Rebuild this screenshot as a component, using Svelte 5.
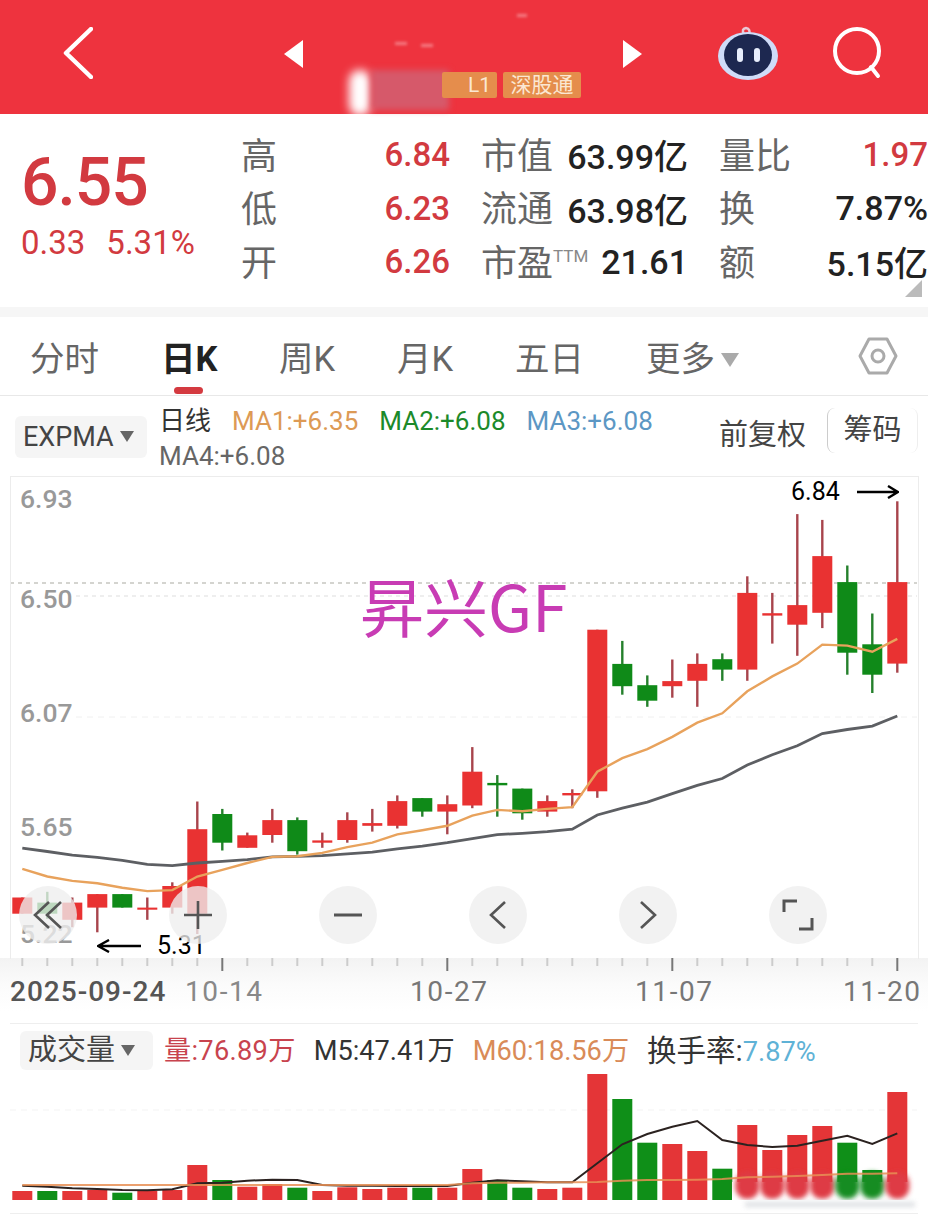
<script>
	// candle rows: [color, bodyTop, bodyBottom, wickTop, wickBottom], measured on a 3x crop of the chart
	const rows = [
		['r', 1232, 1280, 1232, 1280], ['g', 1247, 1280, 1215, 1295], ['r', 1247, 1298, 1232, 1320],
		['r', 1222, 1262, 1222, 1335], ['g', 1222, 1262, 1222, 1262], ['r', 1262, 1268, 1232, 1298],
		['r', 1198, 1262, 1187, 1280], ['r', 1030, 1280, 948, 1340], ['g', 985, 1070, 970, 1093],
		['r', 1048, 1085, 1040, 1085], ['r', 1003, 1047, 970, 1070], ['g', 1003, 1095, 995, 1105],
		['r', 1063, 1070, 1040, 1085], ['r', 1003, 1062, 980, 1070], ['r', 1012, 1020, 970, 1037],
		['r', 947, 1020, 930, 1028], ['g', 938, 978, 938, 993], ['r', 956, 978, 930, 1045],
		['r', 860, 960, 787, 968], ['g', 893, 900, 870, 993], ['g', 910, 983, 910, 1002],
		['r', 947, 978, 930, 993], ['r', 923, 930, 912, 968], ['r', 440, 918, 440, 937],
		['g', 541, 607, 473, 632], ['g', 604, 650, 575, 668], ['r', 592, 607, 528, 641],
		['r', 541, 591, 510, 668], ['g', 527, 558, 510, 591], ['r', 331, 558, 282, 591],
		['r', 391, 398, 331, 481], ['r', 367, 425, 98, 517], ['r', 222, 390, 115, 435],
		['g', 299, 508, 250, 573], ['g', 483, 573, 392, 627], ['r', 299, 540, 60, 567]
	];
	const cx = (i) => 22.3 + 25 * i;
	const py = (v) => +(480 + v / 2.958).toFixed(1);
	const candles = rows.map(([c, t, b, wt, wb], i) => ({
		c, x: cx(i), top: py(t), h: py(b) - py(t), wt: py(wt), wb: py(wb)
	}));

	const orange = [1147, 1170, 1183, 1190, 1203, 1213, 1210, 1170, 1150, 1130, 1112, 1110, 1100, 1083, 1070, 1045, 1033, 1020, 990, 973, 977, 970, 965, 860, 820, 793, 757, 715, 687, 622, 578, 540, 484, 487, 505, 467];
	const grey = [1086, 1096, 1107, 1113, 1122, 1134, 1138, 1130, 1125, 1120, 1112, 1110, 1108, 1103, 1098, 1088, 1080, 1070, 1058, 1046, 1042, 1037, 1030, 988, 968, 950, 925, 900, 880, 840, 810, 783, 747, 735, 725, 695];
	const line = (arr, fy) => arr.map((v, i) => `${cx(i)},${fy(v)}`).join(' ');

	const vols = [
		['r', 543], ['g', 543], ['r', 543], ['r', 540], ['g', 548], ['r', 543], ['r', 540], ['r', 465], ['g', 510],
		['r', 530], ['r', 522], ['g', 533], ['r', 543], ['r', 532], ['r', 537], ['r', 533], ['g', 533], ['r', 533],
		['r', 477], ['g', 510], ['g', 533], ['r', 537], ['r', 533], ['r', 192], ['g', 267], ['g', 398], ['r', 402],
		['r', 423], ['g', 476], ['r', 345], ['r', 420], ['r', 375], ['r', 348], ['g', 398], ['g', 480], ['r', 246]
	];
	const m5 = [527, 530, 535, 537, 540, 541, 538, 520, 518, 512, 509, 510, 525, 527, 527, 528, 528, 528, 518, 511, 514, 517, 517, 460, 403, 372, 350, 333, 390, 405, 411, 407, 392, 377, 402, 370];
	const m60 = [525, 525, 525, 525, 525, 525, 525, 525, 525, 525, 525, 525, 525, 525, 525, 525, 525, 525, 520, 518, 518, 517, 517, 516, 512, 510, 510, 509, 507, 502, 500, 498, 495, 491, 491, 490];
	const vy = (v) => +(v / 3).toFixed(1);

	const stats = [
		[{ l: '高', v: '6.84', red: true }, { l: '市值', v: '63.99亿' }, { l: '量比', v: '1.97', red: true }],
		[{ l: '低', v: '6.23', red: true }, { l: '流通', v: '63.98亿' }, { l: '换', v: '7.87%' }],
		[{ l: '开', v: '6.26', red: true }, { l: '市盈', sup: 'TTM', v: '21.61' }, { l: '额', v: '5.15亿' }]
	];
	const tabs = ['分时', '日K', '周K', '月K', '五日'];
</script>

<div class="page">
	<header class="top">
		<svg class="back" width="30" height="52" viewBox="0 0 30 52"><path d="M28 2 L3 26 L28 50" fill="none" stroke="#fff" stroke-width="4.5" stroke-linecap="round" stroke-linejoin="round"/></svg>
		<div class="pager">
			<i class="tri left"></i>
			<div class="name">
				<span class="smudge white"></span>
				<span class="smudge pink"></span>
				<span class="smudge speck one"></span>
				<span class="smudge speck two"></span>
				<span class="smudge speck three"></span>
				<span class="tag l1">L1</span>
				<span class="tag">深股通</span>
			</div>
			<i class="tri right"></i>
		</div>
		<svg class="robot" width="62" height="56" viewBox="0 0 62 56">
			<path d="M27 8 Q24 3 29 2 Q34 3 32 9" fill="none" stroke="#e9c9d6" stroke-width="2.5"/>
			<ellipse cx="31" cy="30" rx="30" ry="24" fill="#cfdcf8"/>
			<ellipse cx="31" cy="29" rx="24" ry="21" fill="#1d2850"/>
			<rect x="20" y="22" width="6" height="14" rx="3" fill="#e8eefc"/>
			<rect x="37" y="22" width="6" height="14" rx="3" fill="#e8eefc"/>
		</svg>
		<svg class="search" width="52" height="52" viewBox="0 0 52 52"><circle cx="25" cy="24" r="22" fill="none" stroke="#fff" stroke-width="4"/><path d="M39 40 L46 49" stroke="#fff" stroke-width="4" stroke-linecap="round"/></svg>
	</header>

	<section class="quote">
		<div class="price">
			<div class="big">6.55</div>
			<div class="chg"><span>0.33</span><span>5.31%</span></div>
		</div>
		<div class="stats">
			{#each stats as row}
				{#each row as s}
					<div class="stat">
						<span class="lab">{s.l}{#if s.sup}<sup>{s.sup}</sup>{/if}</span>
						<span class="val" class:red={s.red}>{s.v}</span>
					</div>
				{/each}
			{/each}
		</div>
		<i class="corner"></i>
	</section>

	<nav class="tabs">
		{#each tabs as t, i}
			<span class="tab" class:on={i == 1}>{t}</span>
		{/each}
		<span class="tab more">更多<i class="caret"></i></span>
		<svg class="hex" width="40" height="40" viewBox="0 0 40 40"><path d="M11 3 H29 L38 20 L29 37 H11 L2 20 Z" fill="none" stroke="#aaa" stroke-width="3" stroke-linejoin="round"/><circle cx="20" cy="20" r="6" fill="none" stroke="#aaa" stroke-width="3"/></svg>
	</nav>

	<div class="legend">
		<div class="chip">EXPMA<i class="caret dark"></i></div>
		<div class="mas">
			<span class="ma first">日线</span>
			<span class="ma a">MA1:+6.35</span>
			<span class="ma b">MA2:+6.08</span>
			<span class="ma c">MA3:+6.08</span>
			<span class="ma d">MA4:+6.08</span>
		</div>
		<span class="adj">前复权</span>
		<span class="chips">筹码</span>
	</div>

	<div class="chart">
		<svg class="plot" width="928" height="535" viewBox="0 475 928 535">
			<line x1="10" y1="582" x2="917" y2="582" stroke="#a9a9a0" stroke-dasharray="4 4"/>
			<line x1="76" y1="595" x2="917" y2="595" stroke="#ddd" stroke-dasharray="4 4"/>
			<line x1="76" y1="716" x2="917" y2="716" stroke="#f0f0f0" stroke-dasharray="6 5"/>

			<text class="axis" x="20" y="507">6.93</text>
			<text class="axis" x="20" y="607">6.50</text>
			<text class="axis" x="20" y="721">6.07</text>
			<text class="axis" x="20" y="835">5.65</text>
			<text class="axis" x="20" y="942">5.22</text>

			<text class="mark" x="360" y="631">昇兴GF</text>

			{#each candles as k}
				<line x1={k.x} x2={k.x} y1={k.wt} y2={k.wb} stroke={k.c == 'r' ? '#a8444c' : '#25802c'} stroke-width="2.4"/>
				<rect x={k.x - 10} y={k.top} width="20" height={k.h} fill={k.c == 'r' ? '#e93232' : '#0f8a18'}/>
			{/each}

			<polyline points={line(grey, py)} fill="none" stroke="#5d5f63" stroke-width="2.8"/>
			<polyline points={line(orange, py)} fill="none" stroke="#e8a25c" stroke-width="2.4"/>

			<rect x="0" y="957" width="928" height="53" fill="url(#fade)"/>
			<defs>
				<linearGradient id="fade" x1="0" y1="0" x2="0" y2="1"><stop offset="0" stop-color="#f3f3f3"/><stop offset=".5" stop-color="#fbfbfb"/><stop offset="1" stop-color="#fff"/></linearGradient>
			</defs>
			{#each candles as k, i}
				{@const major = (i + 1) % 9 == 0}
				<line x1={k.x} x2={k.x} y1="957" y2={major ? 970 : 965} stroke={major ? '#777' : '#ccc'} stroke-width="2"/>
			{/each}
			<text class="date strong" x="10" y="1000">2025-09-24</text>
			<text class="date soft" x="185" y="1000">10-14</text>
			<text class="date" x="410" y="1000">10-27</text>
			<text class="date" x="635" y="1000">11-07</text>
			<text class="date" x="843" y="1000">11-20</text>
		</svg>

		<div class="note hi">6.84<svg width="42" height="14" viewBox="0 0 42 14"><path d="M0 7 H40 M31 1 L41 7 L31 13" fill="none" stroke="#000" stroke-width="2.4"/></svg></div>
		<div class="note lo"><svg width="44" height="14" viewBox="0 0 44 14"><path d="M44 7 H2 M12 1 L1 7 L12 13" fill="none" stroke="#000" stroke-width="2.4"/></svg>5.31</div>

		<div class="controls">
			<button aria-label="first"><svg width="30" height="30" viewBox="0 0 30 30"><path d="M16 2 L2 15 L16 28 M28 2 L14 15 L28 28" fill="none" stroke="#555" stroke-width="2.6"/></svg></button>
			<button aria-label="zoom in"><svg width="30" height="30" viewBox="0 0 30 30"><path d="M1 15 H29 M15 1 V29" stroke="#555" stroke-width="2.6"/></svg></button>
			<button aria-label="zoom out"><svg width="30" height="30" viewBox="0 0 30 30"><path d="M1 15 H29" stroke="#555" stroke-width="3"/></svg></button>
			<button aria-label="prev"><svg width="30" height="30" viewBox="0 0 30 30"><path d="M22 2 L8 15 L22 28" fill="none" stroke="#555" stroke-width="2.6"/></svg></button>
			<button aria-label="next"><svg width="30" height="30" viewBox="0 0 30 30"><path d="M8 2 L22 15 L8 28" fill="none" stroke="#555" stroke-width="2.6"/></svg></button>
			<button aria-label="fullscreen"><svg width="32" height="32" viewBox="0 0 32 32"><path d="M15 2 H2 V13 M17 30 H30 V19" fill="none" stroke="#555" stroke-width="3"/></svg></button>
		</div>
	</div>

	<section class="volume">
		<div class="vol-legend">
			<div class="chip small">成交量<i class="caret dark"></i></div>
			<span class="v-red">量:76.89万</span>
			<span class="v-dark">M5:47.41万</span>
			<span class="v-org">M60:18.56万</span>
			<span class="v-dark turn">换手率:<em>7.87%</em></span>
		</div>
		<svg class="bars" width="928" height="134" viewBox="0 56 928 134">
			<defs><filter id="soft" x="-30%" y="-30%" width="160%" height="160%"><feGaussianBlur stdDeviation="2.5"/></filter></defs>
			<line x1="10" x2="917" y1="100" y2="100" stroke="#f3f3f3" stroke-dasharray="6 5"/>
			{#each vols as [c, t], i}
				<rect x={cx(i) - 10} y={vy(t)} width="20" height={190 - vy(t)} fill={c == 'r' ? '#e43537' : '#0f8f18'}/>
			{/each}
			<!-- the bottoms of the last bars are smeared in the source -->
			<rect x="732" y="172" width="180" height="18" fill="#fff"/>
			{#each vols.slice(29) as [c], i}
				<rect x={cx(i + 29) - 12} y="162" width="24" height="27" rx="12" fill={c == 'r' ? '#de3a44' : '#128c20'} filter="url(#soft)"/>
			{/each}
			<polyline points={line(m5, vy)} fill="none" stroke="#2b2220" stroke-width="2"/>
			<polyline points={line(m60, vy)} fill="none" stroke="#e88f55" stroke-width="2" opacity=".85"/>
		</svg>
		<div class="wm"></div>
	</section>
</div>

<style>
	:global(body) {
		background: #fff;
		font-family: "Roboto", "Noto Sans CJK SC", sans-serif;
	}
	.page {
		width: 928px;
		height: 1216px;
		overflow: hidden;
	}
	.top {
		align-items: flex-start;
		background: #ee333e;
		display: flex;
		height: 114px;
		padding-left: 63px;
		position: relative;
	}
	.back {
		margin-top: 27px;
	}
	.pager {
		align-items: flex-start;
		display: flex;
		margin-left: 191px;
		width: 358px;
	}
	.tri {
		border-bottom: 14px solid transparent;
		border-top: 14px solid transparent;
		margin-top: 40px;
	}
	.tri.left {
		border-right: 19px solid #fff;
	}
	.tri.right {
		border-left: 19px solid #fff;
	}
	.name {
		align-items: center;
		display: flex;
		flex: 1;
		gap: 6px;
		justify-content: flex-end;
		margin-top: 72px;
		padding-right: 42px;
		position: relative;
	}
	.smudge {
		filter: blur(5px);
		position: absolute;
	}
	.smudge.white {
		background: #fff;
		border-radius: 12px;
		height: 46px;
		left: 46px;
		top: -2px;
		width: 22px;
	}
	.smudge.pink {
		background: #d6596a;
		filter: blur(3px);
		height: 40px;
		left: 68px;
		top: -2px;
		width: 78px;
	}
	.speck {
		background: #f57f86;
		filter: blur(1.5px);
		height: 3px;
		width: 12px;
	}
	.speck.one { left: 92px; top: -30px; }
	.speck.two { left: 118px; top: -28px; }
	.speck.three { left: 214px; top: -58px; width: 10px; }
	.tag {
		background: #e58d4c;
		border-radius: 2px;
		color: #fbe7d2;
		font-size: 21px;
		height: 26px;
		line-height: 26px;
		padding: 0 3px;
		position: relative;
		text-align: center;
		width: 72px;
	}
	.tag.l1 {
		padding-left: 26px;
		text-align: left;
		width: 26px;
	}
	.robot {
		margin-left: 75px;
		margin-top: 26px;
	}
	.search {
		margin-left: 53px;
		margin-top: 27px;
	}
	.quote {
		border-bottom: 10px solid #f6f6f6;
		display: flex;
		height: 193px;
		position: relative;
	}
	.price {
		color: #d23a40;
		padding: 31px 0 0 21px;
		width: 220px;
	}
	.big {
		font-size: 66px;
		font-weight: 500;
		letter-spacing: -1px;
		line-height: 76px;
	}
	.chg {
		display: flex;
		font-size: 33px;
		gap: 21px;
		line-height: 38px;
		margin-top: 3px;
	}
	.stats {
		display: grid;
		flex: 1;
		grid-auto-rows: 53.5px;
		grid-template-columns: 209px 207px 209px;
		column-gap: 31px;
		padding-top: 14px;
		white-space: nowrap;
	}
	.stat {
		align-items: center;
		display: flex;
		justify-content: space-between;
	}
	.lab {
		color: #666;
		font-size: 36px;
		margin-top: -4px;
	}
	.lab sup {
		color: #888;
		font-size: 17px;
		line-height: 0;
		vertical-align: 14px;
	}
	.val {
		color: #222;
		font-size: 34px;
		font-weight: 500;
	}
	.val.red {
		color: #d23a40;
		font-size: 33px;
	}
	.corner {
		border-bottom: 17px solid #bbb;
		border-left: 17px solid transparent;
		bottom: 10px;
		position: absolute;
		right: 6px;
	}
	.tabs {
		align-items: center;
		border-bottom: 1px solid #e8e8e8;
		display: flex;
		height: 78px;
		padding-left: 30px;
		position: relative;
	}
	.tab {
		color: #666;
		font-size: 34.5px;
		margin-right: 60px;
		position: relative;
		white-space: nowrap;
		width: 58px;
	}
	.tab:nth-child(1) { width: 68px; margin-right: 63px; }
	.tab:nth-child(5) { width: 66px; margin-right: 65px; }
	.tab.on {
		color: #222;
		font-weight: 700;
	}
	.tab.on::after {
		background: #d43a40;
		border-radius: 4px;
		bottom: -13px;
		content: "";
		height: 7px;
		left: 13px;
		position: absolute;
		width: 29px;
	}
	.caret {
		border-left: 9px solid transparent;
		border-right: 9px solid transparent;
		border-top: 14px solid #aaa;
		display: inline-block;
		margin-left: 6px;
		vertical-align: 4px;
	}
	.caret.dark {
		border-left-width: 7px;
		border-right-width: 7px;
		border-top: 11px solid #666;
		margin-left: 6px;
	}
	.hex {
		position: absolute;
		left: 858px;
		top: 19px;
	}
	.legend {
		align-items: flex-start;
		display: flex;
		height: 80px;
		padding-left: 15px;
		position: relative;
	}
	.chip {
		background: #f5f5f5;
		border-radius: 6px;
		color: #444;
		font-size: 27px;
		height: 42px;
		line-height: 42px;
		margin-top: 20px;
		padding-left: 8px;
		white-space: nowrap;
		width: 124px;
	}
	.mas {
		column-gap: 21px;
		display: flex;
		flex-wrap: wrap;
		font-size: 26px;
		line-height: 35px;
		margin-left: 12px;
		padding-top: 8px;
		width: 540px;
	}
	.ma.first { color: #333; }
	.ma.a { color: #dd9a55; }
	.ma.b { color: #1c8a2a; }
	.ma.c { color: #5c97c4; }
	.ma.d { color: #666; width: 100%; }
	.adj {
		color: #444;
		font-size: 29px;
		margin-left: 20px;
		margin-top: 15px;
		white-space: nowrap;
	}
	.chips {
		border-left: 1px solid #ccc;
		border-right: 1px solid #eee;
		border-radius: 8px;
		color: #444;
		font-size: 29px;
		height: 45px;
		line-height: 45px;
		margin-left: 21px;
		margin-top: 12px;
		text-align: center;
		width: 89px;
	}
	.chart {
		height: 535px;
		position: relative;
	}
	.plot {
		border: none;
		display: block;
	}
	.chart::before {
		border: 1px solid #ececec;
		border-bottom: none;
		content: "";
		height: 482px;
		left: 10px;
		position: absolute;
		top: 0;
		width: 907px;
	}
	.axis {
		fill: #999;
		font-size: 26.5px;
		font-weight: 500;
	}
	.mark {
		fill: #c83cb4;
		font-family: "Noto Sans CJK SC", sans-serif;
		font-size: 64px;
	}
	.date {
		fill: #777;
		font-size: 28px;
		letter-spacing: 1.6px;
	}
	.date.strong { fill: #555; font-weight: 500; letter-spacing: 1px; }
	.date.soft { fill: #888; }
	.controls {
		display: flex;
		gap: 92px;
		left: 19px;
		position: absolute;
		top: 410px;
	}
	.controls button {
		align-items: center;
		background: rgba(238, 238, 238, 0.78);
		border: none;
		border-radius: 50%;
		display: flex;
		height: 58px;
		justify-content: center;
		padding: 0;
		width: 58px;
	}
	.note {
		align-items: center;
		color: #000;
		display: flex;
		font-size: 25px;
		position: absolute;
	}
	.note.hi {
		gap: 17px;
		left: 791px;
		top: 1px;
	}
	.note.lo {
		gap: 16px;
		left: 97px;
		top: 455px;
	}
	.volume {
		border-bottom: 1px solid #eee;
		border-top: 1px solid #eee;
		height: 189px;
		margin: 12px 10px 0;
		position: relative;
	}
	.vol-legend {
		align-items: center;
		display: flex;
		font-size: 27.2px;
		height: 47px;
		padding: 3px 0 0 10px;
		white-space: nowrap;
	}
	.vol-legend > span {
		margin-right: 18px;
		margin-top: -5px;
	}
	.chip.small {
		font-size: 29px;
		height: 39px;
		line-height: 39px;
		margin: 0 11px 0 0;
		width: 125px;
	}
	.v-red { color: #c8434e; letter-spacing: 0.3px; }
	.v-dark { color: #333; }
	.v-org { color: #d98b58; }
	.turn { font-size: 29.5px; }
	.v-dark em { color: #5fb2d6; font-size: 27.2px; font-style: normal; }
	.bars {
		display: block;
		margin: -8px 0 0 -10px;
	}
	.wm {
		background: #cfd3d8;
		filter: blur(2.5px);
		height: 5px;
		left: 735px;
		opacity: 0.7;
		position: absolute;
		top: 178px;
		width: 170px;
	}
</style>
